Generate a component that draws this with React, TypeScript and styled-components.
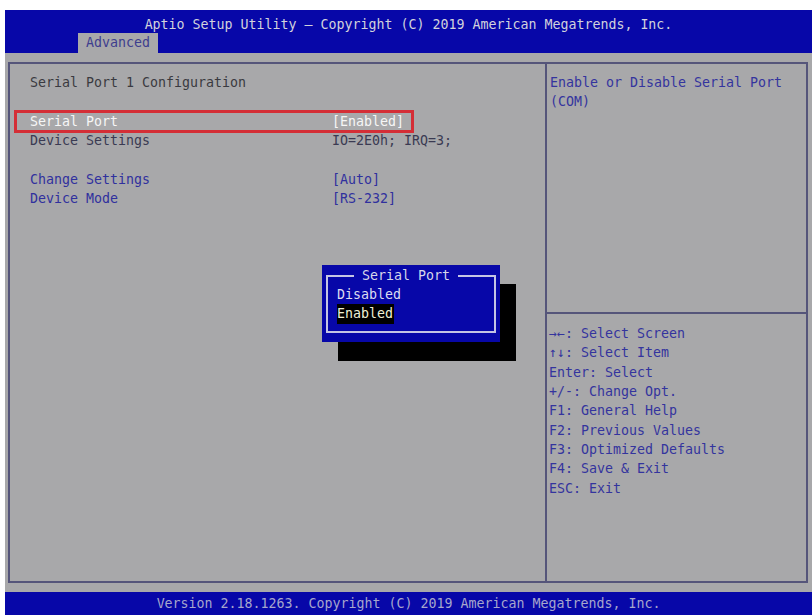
import React from "react";
import styled, { createGlobalStyle } from "styled-components";

const FONT = `"DejaVu Sans Mono", "Liberation Mono", monospace`;
const BLUE = "#0707a8";
const GRAY = "#a8a8aa";
const LINE = 19.33;

const Global = createGlobalStyle`
  html, body { margin: 0; padding: 0; background: #ffffff; }
  #root { width: 812px; height: 615px; overflow: hidden; }
  * { box-sizing: border-box; }
`;

const Page = styled.div`
  width: 812px;
  height: 615px;
  padding: 10px 0 0 5px;
  background: #ffffff;
  font-family: ${FONT};
  font-size: 13.29px;
`;

const Screen = styled.div`
  display: flex;
  flex-direction: column;
  width: 807px;
  height: 605px;
`;

const Header = styled.header`
  height: 43px;
  padding-top: 6px;
  background: ${BLUE};
  display: flex;
  flex-direction: column;
`;

const Title = styled.div`
  height: 17px;
  line-height: 17px;
  text-align: center;
  color: #d2d2dc;
  white-space: pre;
`;

const TabRow = styled.nav`
  display: flex;
  padding-left: 73px;
`;

const Tab = styled.div<{ $active?: boolean }>`
  height: 20px;
  line-height: 20px;
  padding: 0 8px;
  background: ${(p) => (p.$active ? GRAY : "transparent")};
  color: ${(p) => (p.$active ? "#3e3e8e" : "#d2d2dc")};
`;

const Body = styled.main`
  flex: 1;
  background: ${GRAY};
  padding: 9px 4px 9px 3px;
  display: flex;
`;

const Panel = styled.section`
  flex: 1;
  border: 2px solid #55557a;
  display: grid;
  grid-template-columns: 535px 1fr;
`;

const MainPane = styled.div`
  position: relative;
  padding: 9px 0 0 6px;
`;

type Tone = "title" | "dark" | "blue" | "white";
const toneColor: Record<Tone, string> = {
  title: "#3a3a40",
  dark: "#3a3a52",
  blue: "#30309e",
  white: "#f6f6f6",
};

const Row = styled.div<{ $selected?: boolean }>`
  width: 396px;
  height: ${LINE}px;
  line-height: ${LINE}px;
  padding-left: 14px;
  display: grid;
  grid-template-columns: 302px 1fr;
  white-space: pre;
  outline: ${(p) => (p.$selected ? "3px solid #d42e36" : "none")};
  outline-offset: -1px;
`;

const Cell = styled.span<{ $tone: Tone }>`
  color: ${(p) => toneColor[p.$tone]};
`;

const Spacer = styled.div`
  height: ${LINE}px;
`;

const SidePane = styled.aside`
  border-left: 2px solid #55557a;
  display: flex;
  flex-direction: column;
`;

const HelpTop = styled.div`
  height: 248px;
  padding: 9px 0 0 3px;
`;

const HelpBottom = styled.div`
  flex: 1;
  border-top: 2px solid #55557a;
  padding: 10px 0 0 2px;
`;

const HelpLine = styled.div`
  height: ${LINE}px;
  line-height: ${LINE}px;
  color: #34349e;
  white-space: pre;
`;

const Popup = styled.div`
  position: absolute;
  left: 312px;
  top: 201px;
  width: 178px;
  padding: 10px 4px 9px 4px;
  background: ${BLUE};
  box-shadow: 16px 19px 0 #000000;
`;

const Frame = styled.div`
  position: relative;
  border: 2px solid #c4c4e4;
  padding: 8px 0 7px 9px;
`;

const FrameTitle = styled.div`
  position: absolute;
  top: -10px;
  left: 26px;
  height: 18px;
  line-height: 18px;
  padding: 0 8px;
  background: ${BLUE};
  color: #d6d6ea;
  white-space: pre;
`;

const Option = styled.div`
  height: ${LINE}px;
  line-height: ${LINE}px;
`;

const OptionText = styled.span<{ $active?: boolean }>`
  display: inline-block;
  padding: 0 1px 0 0;
  background: ${(p) => (p.$active ? "#000000" : "transparent")};
  color: ${(p) => (p.$active ? "#efefd6" : "#dcdcf0")};
`;

const Footer = styled.footer`
  height: 23px;
  line-height: 23px;
  background: ${BLUE};
  color: #a6a6cc;
  text-align: center;
  white-space: pre;
`;

const help = [
  "→←: Select Screen",
  "↑↓: Select Item",
  "Enter: Select",
  "+/-: Change Opt.",
  "F1: General Help",
  "F2: Previous Values",
  "F3: Optimized Defaults",
  "F4: Save & Exit",
  "ESC: Exit",
];

export default function App() {
  return (
    <>
      <Global />
      <Page>
        <Screen>
          <Header>
            <Title>Aptio Setup Utility – Copyright (C) 2019 American Megatrends, Inc.</Title>
            <TabRow>
              <Tab $active>Advanced</Tab>
            </TabRow>
          </Header>
          <Body>
            <Panel>
              <MainPane>
                <Row>
                  <Cell $tone="title">Serial Port 1 Configuration</Cell>
                </Row>
                <Spacer />
                <Row $selected>
                  <Cell $tone="white">Serial Port</Cell>
                  <Cell $tone="white">[Enabled]</Cell>
                </Row>
                <Row>
                  <Cell $tone="dark">Device Settings</Cell>
                  <Cell $tone="dark">IO=2E0h; IRQ=3;</Cell>
                </Row>
                <Spacer />
                <Row>
                  <Cell $tone="blue">Change Settings</Cell>
                  <Cell $tone="blue">[Auto]</Cell>
                </Row>
                <Row>
                  <Cell $tone="blue">Device Mode</Cell>
                  <Cell $tone="blue">[RS-232]</Cell>
                </Row>

                <Popup>
                  <Frame>
                    <FrameTitle>Serial Port</FrameTitle>
                    <Option>
                      <OptionText>Disabled</OptionText>
                    </Option>
                    <Option>
                      <OptionText $active>Enabled</OptionText>
                    </Option>
                  </Frame>
                </Popup>
              </MainPane>
              <SidePane>
                <HelpTop>
                  <HelpLine>Enable or Disable Serial Port</HelpLine>
                  <HelpLine>(COM)</HelpLine>
                </HelpTop>
                <HelpBottom>
                  {help.map((h) => (
                    <HelpLine key={h}>{h}</HelpLine>
                  ))}
                </HelpBottom>
              </SidePane>
            </Panel>
          </Body>
          <Footer>Version 2.18.1263. Copyright (C) 2019 American Megatrends, Inc.</Footer>
        </Screen>
      </Page>
    </>
  );
}
